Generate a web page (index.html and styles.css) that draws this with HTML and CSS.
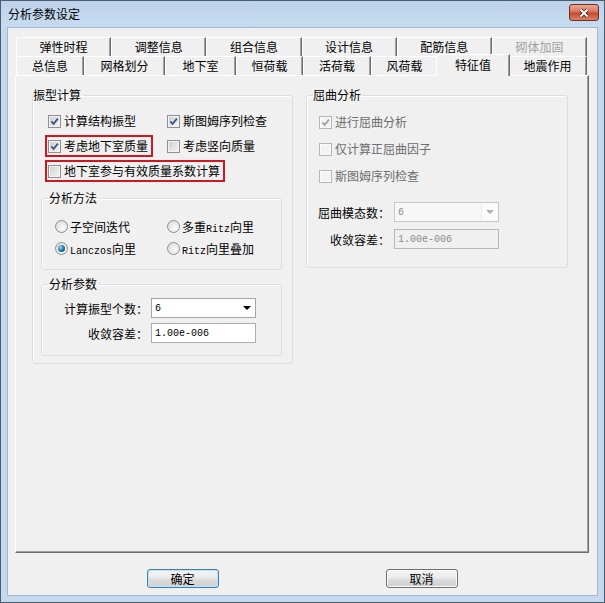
FILE: index.html
```html
<!DOCTYPE html>
<html lang="zh-CN">
<head>
    <meta charset="UTF-8">
    <title>分析参数设定</title>
    <link rel="stylesheet" href="styles.css">
</head>
<body>
    <div class="window">
        <div class="titlebar">
            <span class="title">分析参数设定</span>
            <button class="close">
                <svg width="12" height="10" viewBox="0 0 12 10">
                    <path d="M2.5 1.5 L9.5 8.5 M9.5 1.5 L2.5 8.5" stroke="#4a1a12" stroke-width="3.6" fill="none"/>
                    <path d="M2.5 1.5 L9.5 8.5 M9.5 1.5 L2.5 8.5" stroke="#fff" stroke-width="2" fill="none"/>
                </svg>
            </button>
        </div>
        <div class="frame">
            <div class="client">
                <div class="tabs">
                    <div class="tab-row back">
                        <div class="tab">弹性时程</div>
                        <div class="tab">调整信息</div>
                        <div class="tab">组合信息</div>
                        <div class="tab">设计信息</div>
                        <div class="tab">配筋信息</div>
                        <div class="tab disabled">砌体加固</div>
                    </div>
                    <div class="tab-row front">
                        <div class="tab">总信息</div>
                        <div class="tab">网格划分</div>
                        <div class="tab">地下室</div>
                        <div class="tab">恒荷载</div>
                        <div class="tab">活荷载</div>
                        <div class="tab">风荷载</div>
                        <div class="tab active">特征值</div>
                        <div class="tab">地震作用</div>
                    </div>
                </div>
                <div class="panel">
                    <fieldset class="group modal">
                        <legend>振型计算</legend>
                        <div class="modal-body">
                            <div class="checks">
                                <label class="item">
                                    <span class="box"><svg width="9" height="9" viewBox="0 0 9 9"><path d="M1.3 4.4 L3.6 6.9 L7.9 1.6" stroke="#3a5684" stroke-width="1.7" fill="none"/></svg></span>
                                    计算结构振型
                                </label>
                                <label class="item">
                                    <span class="box"><svg width="9" height="9" viewBox="0 0 9 9"><path d="M1.3 4.4 L3.6 6.9 L7.9 1.6" stroke="#3a5684" stroke-width="1.7" fill="none"/></svg></span>
                                    斯图姆序列检查
                                </label>
                                <label class="item marked">
                                    <span class="box"><svg width="9" height="9" viewBox="0 0 9 9"><path d="M1.3 4.4 L3.6 6.9 L7.9 1.6" stroke="#3a5684" stroke-width="1.7" fill="none"/></svg></span>
                                    考虑地下室质量
                                </label>
                                <label class="item">
                                    <span class="box"></span>
                                    考虑竖向质量
                                </label>
                                <label class="item marked wide">
                                    <span class="box"></span>
                                    地下室参与有效质量系数计算
                                </label>
                            </div>

                            <fieldset class="group sub method">
                                <legend>分析方法</legend>
                                <div class="radios">
                                    <label class="ritem"><span class="radio"></span><span>子空间迭代</span></label>
                                    <label class="ritem"><span class="radio"></span><span>多重<span class="latin">Ritz</span>向里</span></label>
                                    <label class="ritem"><span class="radio on"></span><span><span class="latin">Lanczos</span>向里</span></label>
                                    <label class="ritem"><span class="radio"></span><span><span class="latin">Ritz</span>向里叠加</span></label>
                                </div>
                            </fieldset>

                            <fieldset class="group sub params">
                                <legend>分析参数</legend>
                                <div class="form">
                                    <span class="flabel">计算振型个数：</span>
                                    <div class="combo"><span>6</span><span class="drop"><span class="arrow"></span></span></div>
                                    <span class="flabel">收敛容差：</span>
                                    <div class="field">1.00e-006</div>
                                </div>
                            </fieldset>
                        </div>
                    </fieldset>

                    <fieldset class="group buckling">
                        <legend>屈曲分析</legend>
                        <div class="buckling-body">
                            <label class="item off">
                                <span class="box"><svg width="9" height="9" viewBox="0 0 9 9"><path d="M1.3 4.4 L3.6 6.9 L7.9 1.6" stroke="#a2a2a2" stroke-width="1.7" fill="none"/></svg></span>
                                进行屈曲分析
                            </label>
                            <label class="item off">
                                <span class="box"></span>
                                仅计算正屈曲因子
                            </label>
                            <label class="item off">
                                <span class="box"></span>
                                斯图姆序列检查
                            </label>
                            <div class="form">
                                <span class="flabel">屈曲模态数：</span>
                                <div class="combo off"><span>6</span><span class="drop"><span class="arrow"></span></span></div>
                                <span class="flabel">收敛容差：</span>
                                <div class="field off">1.00e-006</div>
                            </div>
                        </div>
                    </fieldset>
                </div>
                <div class="footer">
                    <button class="btn default">确定</button>
                    <button class="btn">取消</button>
                </div>
            </div>
        </div>
    </div>
</body>
</html>
```

FILE: styles.css
```css
* {
    box-sizing: border-box;
}
body {
    margin: 0;
    font-family: "Noto Sans CJK SC", "Noto Sans", sans-serif;
    font-size: 12px;
    color: #000;
    background: #fff;
}
.window {
    width: 605px;
    height: 603px;
    border: 1px solid #4b5d70;
    background: #c4d9ee;
    display: flex;
    flex-direction: column;
}
.titlebar {
    flex: none;
    height: 26px;
    display: flex;
    justify-content: space-between;
    align-items: center;
    padding: 0 5px 0 7px;
    background: linear-gradient(#bdd3ea, #c7dbf0);
}
.title {
    line-height: 16px;
}
.close {
    align-self: flex-start;
    margin-top: 3px;
    width: 30px;
    height: 17px;
    padding: 0;
    border: 1px solid #6e2c1f;
    border-radius: 3px;
    background: linear-gradient(#e9a996, #d77259 48%, #c4462b 52%, #d6836a);
    display: flex;
    align-items: center;
    justify-content: center;
}
.frame {
    flex: 1;
    display: flex;
    padding: 0 6px 6px;
}
.client {
    flex: 1;
    display: flex;
    flex-direction: column;
    border: 1px solid #a3b8ce;
    background: #f0f0f0;
    padding: 9px 8px 0 7px;
}

/* tabs */
.tabs {
    margin: 0 2px 0 1px;
}
.tab-row {
    display: flex;
    height: 19px;
}
.tab {
    display: flex;
    align-items: center;
    justify-content: center;
    white-space: nowrap;
    background: #f0f0f0;
    border-top: 1px solid #fff;
    border-left: 1px solid #fff;
    border-right: 1px solid #6d6d6d;
    box-shadow: inset -1px 0 #a0a0a0;
    line-height: 16px;
}
.back .tab {
    flex: 1;
}
.front .tab {
    flex: none;
}
.front .tab:nth-child(1) { width: 68px; }
.front .tab:nth-child(2) { width: 81px; }
.front .tab:nth-child(3) { width: 71px; }
.front .tab:nth-child(4) { width: 67px; }
.front .tab:nth-child(5) { width: 68px; }
.front .tab:nth-child(6) { width: 67px; }
.front .tab:nth-child(7) { width: 74px; }
.front .tab:nth-child(8) { width: 79px; }
.tab.disabled {
    color: #a0a0a0;
}
.tab.active {
    margin: -2px -2px -1px;
    position: relative;
    z-index: 1;
    padding-bottom: 2px;
}

/* page */
.panel {
    height: 478px;
    display: flex;
    align-items: flex-start;
    gap: 13px;
    padding: 12px 0 0 16px;
    border: 1px solid;
    border-color: #fff #6d6d6d #6d6d6d #fff;
    box-shadow: inset -1px -1px #a0a0a0;
}
.group {
    margin: 0;
    padding: 0;
    min-width: 0;
    border: 1px solid #d5dfe5;
    border-radius: 3px;
    box-shadow: inset 1px 1px #fff;
}
.group legend {
    padding: 0 2px 0 0;
    line-height: 14px;
}
.modal {
    width: 261px;
}
.modal-body {
    padding: 8px 0 7px 8px;
}
.checks {
    display: grid;
    grid-template-columns: 119px auto;
    row-gap: 3px;
    justify-items: start;
    padding-left: 4px;
}
.wide {
    grid-column: 1 / -1;
}
.item {
    display: flex;
    align-items: center;
    gap: 3px;
    height: 22px;
    padding: 0 3px 0 1px;
    border: 2px solid transparent;
    line-height: 16px;
    white-space: nowrap;
}
.item.marked {
    border-color: #cf1720;
}
.item.off {
    color: #6d6d6d;
}
.box {
    flex: none;
    width: 13px;
    height: 13px;
    display: flex;
    align-items: center;
    justify-content: center;
    border: 1px solid #8e8f8f;
    background: linear-gradient(135deg, #c9cdd2, #f7f7f7);
    box-shadow: inset 0 0 0 1px #f4f4f4;
}
.off .box {
    border-color: #b6b6b6;
    background: #f3f3f3;
    box-shadow: inset 0 0 0 1px #fafafa;
}

.sub {
    width: 241px;
    margin-top: 9px;
}
.sub legend {
    margin-left: 7px;
}
.params {
    margin-top: 7px;
}
.radios {
    display: grid;
    grid-template-columns: 112px auto;
    padding: 10px 0 10px 13px;
}
.ritem {
    display: flex;
    align-items: center;
    gap: 2px;
    height: 22px;
    white-space: nowrap;
}
.latin {
    font-family: "Liberation Mono", monospace;
    font-size: 10px;
}
.radio {
    flex: none;
    width: 13px;
    height: 13px;
    border-radius: 50%;
    border: 1px solid #8e8f8f;
    background: radial-gradient(circle at 65% 65%, #fbfbfb, #d3d6da);
    display: flex;
    align-items: center;
    justify-content: center;
}
.radio.on::after {
    content: "";
    width: 7px;
    height: 7px;
    border-radius: 50%;
    background: radial-gradient(circle at 35% 35%, #9ad9f6, #1b6ea3 55%, #0c4670);
}

.form {
    display: grid;
    grid-template-columns: 106px 105px;
    column-gap: 3px;
    row-gap: 5px;
    align-items: center;
    padding: 7px 0 12px;
}
.flabel {
    text-align: right;
    white-space: nowrap;
}
.combo,
.field {
    height: 20px;
    display: flex;
    align-items: center;
    background: #fff;
    border: 1px solid #abadb3;
    font-family: "Liberation Mono", monospace;
    font-size: 10px;
    padding-left: 3px;
}
.combo {
    justify-content: space-between;
    border-color: #a6a6a6;
}
.drop {
    width: 17px;
    height: 100%;
    display: flex;
    align-items: center;
    justify-content: center;
}
.arrow {
    width: 0;
    height: 0;
    border-left: 4px solid transparent;
    border-right: 4px solid transparent;
    border-top: 4px solid #000;
}
.combo.off {
    background: #f7f7f7;
    border-color: #c8c8c8;
    color: #8a8a8a;
}
.combo.off .drop {
    border-left: 1px solid #ececec;
    background: #fbfbfb;
}
.combo.off .arrow {
    border-top-color: #b0b0b0;
}
.field.off {
    background: #f0f0f0;
    border-color: #b5b9bd;
    color: #8a8a8a;
}

.buckling {
    width: 262px;
}
.buckling legend {
    margin-left: 6px;
}
.buckling-body {
    display: flex;
    flex-direction: column;
    align-items: flex-start;
    gap: 5px;
    padding: 9px 0 0 9px;
}
.buckling .form {
    grid-template-columns: 83px 105px;
    column-gap: 4px;
    row-gap: 7px;
    margin: 10px 0 0 -9px;
    padding: 0 0 18px;
}

/* buttons */
.footer {
    display: flex;
    justify-content: center;
    gap: 167px;
    margin-top: 16px;
}
.btn {
    width: 72px;
    height: 19px;
    padding: 0;
    font: inherit;
    line-height: 16px;
    border: 1px solid #707070;
    border-radius: 3px;
    background: linear-gradient(#f4f4f4, #ebebeb 48%, #dddddd 52%, #d0d0d0);
    box-shadow: inset 0 0 0 1px #fafafa;
}
.btn.default {
    border-color: #3c7fb1;
    box-shadow: inset 0 0 0 1px #bfe3f8;
}
```
